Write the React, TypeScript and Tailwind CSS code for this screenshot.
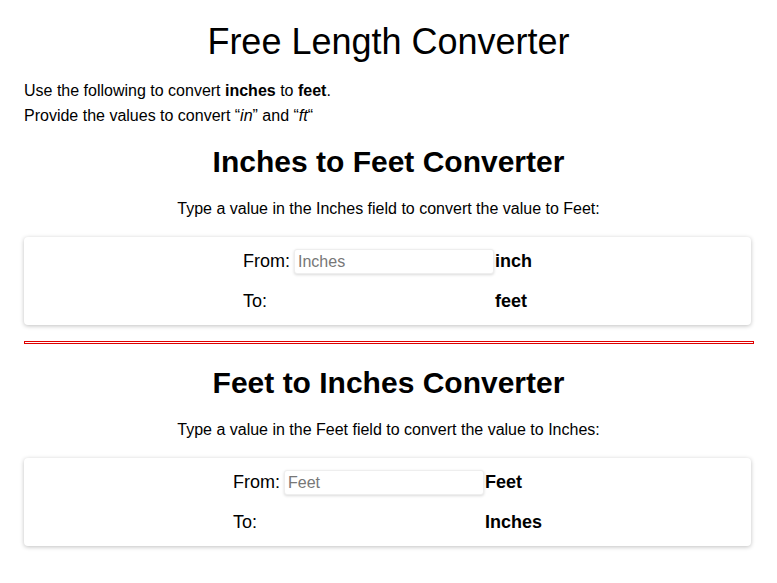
function Converter({ from, to, placeholder }: { from: string; to: string; placeholder: string }) {
  return (
    <div className="mx-auto w-[727px] ml-0 rounded-[4px] bg-white shadow-[0_1px_4px_rgba(0,0,0,0.25)] pt-[10px] pb-[12px] mt-[16px]">
      <div className="mx-auto grid w-max grid-cols-[auto_auto_auto] items-center text-[18px] text-black">
        <div className="pr-[4px] leading-[28px]">From:</div>
        <div className="pr-[1px]">
          <input
            type="text"
            placeholder={placeholder}
            className="h-[25px] w-[200px] rounded-[3px] border border-[#eeeeee] bg-white px-[3px] text-[16px] shadow-[0_1px_3px_rgba(0,0,0,0.15)] outline-none placeholder:text-[#777]"
          />
        </div>
        <div className="font-bold leading-[28px]">{from}</div>
        <div className="mt-[14px] leading-[24px]">To:</div>
        <div className="mt-[14px]"></div>
        <div className="mt-[14px] font-bold leading-[24px]">{to}</div>
      </div>
    </div>
  );
}

export default function App() {
  return (
    <div className="min-h-[583px] bg-white px-6 pb-8 font-['Liberation_Sans',Arial,sans-serif] text-black">
      <h1 className="pt-[21px] text-center text-[36px] leading-[42px]">Free Length Converter</h1>
      <p className="mt-[15px] text-[16px] leading-[25px]">
        Use the following to convert <b>inches</b> to <b>feet</b>.
        <br />
        Provide the values to convert “<i>in</i>” and “<i>ft</i>“
      </p>

      <h2 className="mt-[16px] text-center text-[30px] font-bold leading-[36px]">Inches to Feet Converter</h2>
      <p className="mt-[17px] text-center text-[16px] leading-[24px]">
        Type a value in the Inches field to convert the value to Feet:
      </p>
      <Converter from="inch" to="feet" placeholder="Inches" />

      <hr className="mt-[16px] h-[3px] w-[730px] border border-[#e00000] bg-white" />

      <h2 className="mt-[21px] text-center text-[30px] font-bold leading-[36px]">Feet to Inches Converter</h2>
      <p className="mt-[17px] text-center text-[16px] leading-[24px]">
        Type a value in the Feet field to convert the value to Inches:
      </p>
      <Converter from="Feet" to="Inches" placeholder="Feet" />
    </div>
  );
}
